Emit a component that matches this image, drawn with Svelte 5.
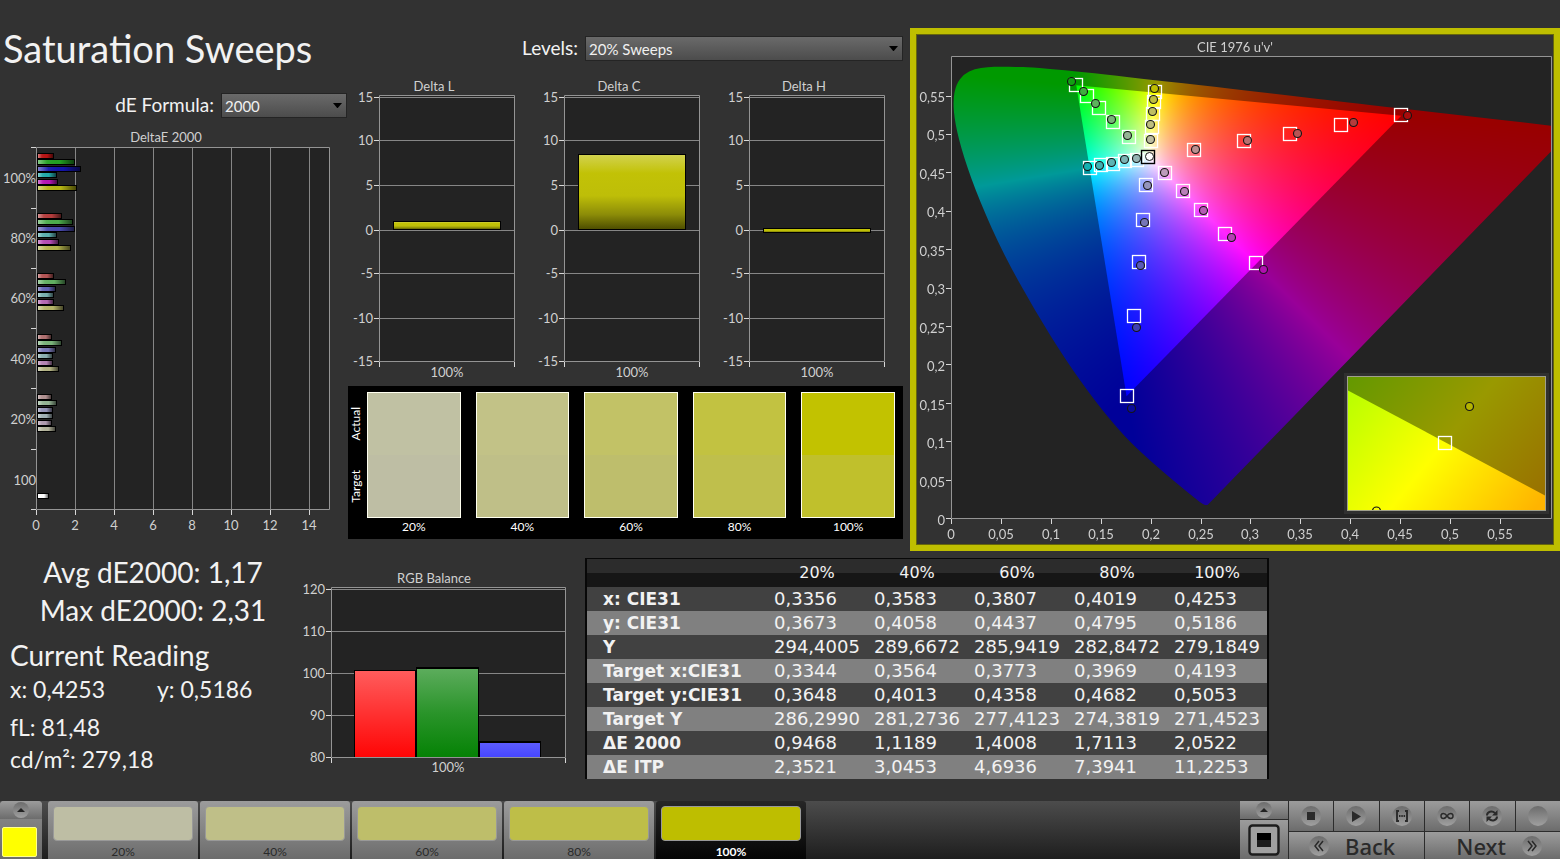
<script>
  import { onMount } from 'svelte';

  // Plot area of the chromaticity diagram, in view-box units
  const view = { x: 917, y: 35, w: 636, h: 509 };
  const px = (u) => 951.5 + u * 998;
  const py = (v) => 517.5 - v * 768.5;

  const locus = [
    [0.1741, 0.005], [0.1733, 0.0048], [0.1714, 0.0051], [0.1689, 0.0069], [0.1644, 0.0109],
    [0.1566, 0.0177], [0.144, 0.0297], [0.1355, 0.0399], [0.1241, 0.0578], [0.1096, 0.0868],
    [0.0913, 0.1327], [0.0687, 0.2007], [0.0454, 0.295], [0.0235, 0.4127], [0.0082, 0.5384],
    [0.0039, 0.6548], [0.0139, 0.7502], [0.0389, 0.812], [0.0743, 0.8338], [0.1142, 0.8262],
    [0.1547, 0.8059], [0.1929, 0.7816], [0.2296, 0.7543], [0.3016, 0.6923], [0.3731, 0.6245],
    [0.4441, 0.5547], [0.5125, 0.4866], [0.5752, 0.4242], [0.627, 0.3725], [0.6915, 0.3083],
    [0.7347, 0.2653]
  ].map(([x, y]) => {
    const d = -2 * x + 12 * y + 3;
    return [px((4 * x) / d), py((9 * y) / d)];
  });
  const gamut = [[0.4507, 0.5229], [0.125, 0.5625], [0.1754, 0.1579]].map(([u, v]) => [px(u), py(v)]);

  function colourField(scale) {
    const c = document.createElement('canvas');
    c.width = view.w;
    c.height = view.h;
    const g = c.getContext('2d');
    const img = g.createImageData(view.w, view.h);
    for (let j = 0; j < view.h; j++) {
      const v = Math.max(0.004, (517.5 - (view.y + j)) / 768.5);
      for (let i = 0; i < view.w; i++) {
        const u = (view.x + i - 951.5) / 998;
        const X = (9 * u) / (4 * v);
        const Z = (12 - 3 * u - 20 * v) / (4 * v);
        const rgb = [
          3.2406 * X - 1.5372 - 0.4986 * Z,
          -0.9689 * X + 1.8758 + 0.0415 * Z,
          0.0557 * X - 0.204 + 1.057 * Z
        ].map((n) => Math.max(0, n));
        const m = Math.max(...rgb, 0.0001);
        const o = (j * view.w + i) * 4;
        for (let k = 0; k < 3; k++) img.data[o + k] = (255 * scale * rgb[k]) / m;
        img.data[o + 3] = 255;
      }
    }
    g.putImageData(img, 0, 0);
    return c;
  }

  let canvas;
  onMount(() => {
    const g = canvas.getContext('2d');
    const at = ([x, y]) => [x - view.x, y - view.y];
    g.fillStyle = '#232323';
    g.fillRect(34, 21, 600, 462);
    g.save();
    g.beginPath();
    g.rect(34, 21, 600, 462);
    g.clip();
    g.save();
    g.beginPath();
    const p = locus.map(at);
    g.moveTo(...p[0]);
    for (let i = 1; i < p.length - 1; i++) {
      g.quadraticCurveTo(...p[i], (p[i][0] + p[i + 1][0]) / 2, (p[i][1] + p[i + 1][1]) / 2);
    }
    g.lineTo(...p[p.length - 1]);
    g.closePath();
    g.clip();
    g.drawImage(colourField(0.6), 0, 0);
    g.restore();
    g.beginPath();
    gamut.map(at).forEach((q) => g.lineTo(...q));
    g.closePath();
    g.clip();
    g.drawImage(colourField(1), 0, 0);
    g.restore();
  });

  // [target x, target y, actual x, actual y, fill]
  const points = [
    [1076, 85, 1071, 81, '#12a012'], [1087, 96, 1083, 91, '#3fae3f'], [1099, 108, 1095, 103, '#5cb45c'],
    [1113, 122, 1111, 119, '#78b478'], [1129, 137, 1127, 135, '#94b494'],
    [1155, 92, 1154, 88, '#bebe00'], [1154, 102, 1153, 99, '#bebe40'], [1153, 114, 1152, 111, '#bebe62'],
    [1152, 127, 1150, 124, '#bebe80'], [1151, 141, 1150, 139, '#bebea0'],
    [1090, 168, 1087, 166, '#14b0b0'], [1101, 165, 1099, 165, '#3fb0b0'], [1113, 164, 1111, 162, '#5cb4b4'],
    [1125, 161, 1124, 159, '#7ab4b4'], [1137, 160, 1136, 158, '#96b4b4'],
    [1146, 185, 1147, 185, '#9494bc'], [1143, 220, 1144, 222, '#7676b8'], [1139, 262, 1140, 265, '#5a5ab8'],
    [1134, 316, 1136, 327, '#4040b4'], [1127, 396, 1131, 408, '#0a0a9c'],
    [1165, 173, 1164, 172, '#bc9cbc'], [1183, 191, 1184, 191, '#b880b8'], [1201, 210, 1203, 210, '#b45cb4'],
    [1225, 234, 1231, 237, '#b440b4'], [1256, 263, 1263, 269, '#b010b0'],
    [1194, 150, 1195, 149, '#bc9090'], [1244, 141, 1247, 140, '#b87070'], [1290, 134, 1297, 133, '#b85454'],
    [1341, 125, 1353, 122, '#b43c3c'], [1401, 115, 1407, 115, '#a80c0c']
  ];
  const cieX = ['0', '0,05', '0,1', '0,15', '0,2', '0,25', '0,3', '0,35', '0,4', '0,45', '0,5', '0,55'];

  const deltaE = [
    { label: '100%', y: 153, ends: [54, 75, 81, 57, 58, 77], fills: ['#b81414', '#22a022', '#1414a8', '#22aaaa', '#b414b4', '#b4b414'] },
    { label: '80%', y: 213, ends: [62, 73, 75, 57, 59, 71], fills: ['#b43c3c', '#4cac4c', '#4848ac', '#5cb0b0', '#b44cb4', '#b4b44c'] },
    { label: '60%', y: 273, ends: [54, 66, 56, 54, 54, 64], fills: ['#b45454', '#62b062', '#6262b4', '#78b0b0', '#b468b4', '#b4b468'] },
    { label: '40%', y: 334, ends: [52, 62, 56, 53, 53, 59], fills: ['#b07070', '#7ab47a', '#7a7ab8', '#8cb0b0', '#b484b4', '#b4b484'] },
    { label: '20%', y: 394, ends: [52, 57, 53, 53, 52, 56], fills: ['#b09090', '#94b494', '#9494b8', '#a0b0b4', '#b09cb0', '#b4b49c'] }
  ];
  const deltaTicks = [[15, 97], [10, 140], [5, 185], [0, 230], [-5, 273], [-10, 318], [-15, 361]];
  const deltas = [
    { title: 'Delta L', top: 221, h: 8 },
    { title: 'Delta C', top: 154, h: 75 },
    { title: 'Delta H', top: 228, h: 4 }
  ];
  const rgbTicks = [[120, 589], [110, 631], [100, 673], [90, 715], [80, 757]];

  const levels = [
    { label: '20%', actual: '#c0c1a3', target: '#bebea4' },
    { label: '40%', actual: '#c2c287', target: '#bfbf88' },
    { label: '60%', actual: '#c2c266', target: '#bebe6c' },
    { label: '80%', actual: '#c2c241', target: '#bfbf4c' },
    { label: '100%', actual: '#c2c200', target: '#c0c02c' }
  ];
  const chips = ['#bebea4', '#bfbf88', '#bebe6a', '#bebe48', '#bebe00'];

  const rows = [
    ['x: CIE31', '0,3356', '0,3583', '0,3807', '0,4019', '0,4253'],
    ['y: CIE31', '0,3673', '0,4058', '0,4437', '0,4795', '0,5186'],
    ['Y', '294,4005', '289,6672', '285,9419', '282,8472', '279,1849'],
    ['Target x:CIE31', '0,3344', '0,3564', '0,3773', '0,3969', '0,4193'],
    ['Target y:CIE31', '0,3648', '0,4013', '0,4358', '0,4682', '0,5053'],
    ['Target Y', '286,2990', '281,2736', '277,4123', '274,3819', '271,4523'],
    ['ΔE 2000', '0,9468', '1,1189', '1,4008', '1,7113', '2,0522'],
    ['ΔE ITP', '2,3521', '3,0453', '4,6936', '7,3941', '11,2253']
  ];

  let selected = 4;
</script>

<div class="app">
  <main>
    <div class="top">
      <section class="left">
        <h1>Saturation Sweeps</h1>
        <div class="field formula">
          <label for="formula">dE Formula:</label>
          <span class="pick">
            <select id="formula"><option>2000</option></select>
            <svg class="arrow" viewBox="0 0 10 6"><path d="M0 0h10L5 6z" /></svg>
          </span>
        </div>
        <svg class="chart" viewBox="0 122 348 418" role="img" aria-label="DeltaE 2000">
          <defs>
            <linearGradient id="barH">
              <stop offset="0" stop-color="#fff" stop-opacity=".45" />
              <stop offset=".25" stop-color="#fff" stop-opacity=".05" />
              <stop offset=".6" stop-color="#000" stop-opacity="0" />
              <stop offset="1" stop-color="#000" stop-opacity=".6" />
            </linearGradient>
          </defs>
          <text x="166" y="142" text-anchor="middle">DeltaE 2000</text>
          <rect class="plot" x="37" y="148" width="292" height="361" />
          {#each [2, 4, 6, 8, 10, 12, 14] as n}
            <rect class="grid" x={Math.round(36 + n * 19.47)} y="148" width="1" height="361" />
          {/each}
          <path class="frame" d="M36.5 147.5h293v362h-293z" />
          {#each [147, 208, 268, 328, 388, 449, 509] as y}
            <rect class="tick" x="31" {y} width="5" height="1" />
          {/each}
          {#each [0, 2, 4, 6, 8, 10, 12, 14] as n}
            <rect class="tick" x={Math.round(36 + n * 19.47)} y="510" width="1" height="5" />
            <text x={Math.round(36 + n * 19.47)} y="530" text-anchor="middle">{n}</text>
          {/each}
          {#each deltaE as group}
            <text x="36" y={group.y + 30} text-anchor="end">{group.label}</text>
            {#each group.ends as end, i}
              <rect x="37" y={Math.round(group.y + i * 6.4)} width={end - 37} height="6" />
              <rect x="38" y={Math.round(group.y + i * 6.4) + 1} width={end - 39} height="4" fill={group.fills[i]} />
              <rect x="38" y={Math.round(group.y + i * 6.4) + 1} width={end - 39} height="4" fill="url(#barH)" />
            {/each}
          {/each}
          <text x="36" y="485" text-anchor="end">100</text>
          <rect x="37" y="493" width="12" height="6" />
          <rect x="38" y="494" width="10" height="4" fill="#fff" />
          <rect x="38" y="494" width="10" height="4" fill="url(#barH)" />
        </svg>
      </section>

      <section class="middle">
        <div class="field">
          <label for="levels">Levels:</label>
          <span class="pick wide">
            <select id="levels"><option>20% Sweeps</option></select>
            <svg class="arrow" viewBox="0 0 10 6"><path d="M0 0h10L5 6z" /></svg>
          </span>
        </div>
        <div class="deltas">
          {#each deltas as d, n}
            <svg class="chart" viewBox="0 72 185 312" role="img" aria-label={d.title}>
              <defs>
                <linearGradient id="barV{n}" x2="0" y2="1">
                  <stop offset="0" stop-color="#d2d250" />
                  <stop offset=".25" stop-color="#c2c206" />
                  <stop offset=".55" stop-color="#bebe08" />
                  <stop offset=".8" stop-color="#8c8c08" />
                  <stop offset="1" stop-color="#4c4c00" />
                </linearGradient>
              </defs>
              <text x="86" y="91" text-anchor="middle">{d.title}</text>
              <rect class="plot" x="31" y="96" width="135" height="265" />
              {#each deltaTicks as [label, y]}
                <rect class="grid" x="31" {y} width="135" height="1" />
                <rect class="tick" x="26" {y} width="5" height="1" />
                <text x="25" y={y + 5} text-anchor="end">{label}</text>
              {/each}
              <path class="frame" d="M31.5 95.5h135v266h-135z" />
              <rect class="tick" x="31" y="362" width="1" height="5" />
              <rect class="tick" x="166" y="362" width="1" height="5" />
              <rect x="45.5" y={d.top + 0.5} width="107" height={d.h} fill="url(#barV{n})" stroke="#000" />
              <text x="99" y="377" text-anchor="middle">100%</text>
            </svg>
          {/each}
        </div>
        <div class="compare">
          <div class="sides"><span>Actual</span><span>Target</span></div>
          {#each levels as l}
            <div class="level">
              <div class="pair">
                <div style="background:{l.actual}"></div>
                <div style="background:{l.target}"></div>
              </div>
              <span>{l.label}</span>
            </div>
          {/each}
        </div>
      </section>

      <section class="cie">
        <div class="stack">
          <canvas bind:this={canvas} width="636" height="509"></canvas>
          <svg viewBox="917 35 636 509" role="img" aria-label="CIE 1976 u'v'">
            <defs>
              <linearGradient id="lit" gradientUnits="userSpaceOnUse" x1="1357" y1="372" x2="1531" y2="514">
                <stop offset="0" stop-color="#b4ff00" /><stop offset=".5" stop-color="#ff0" /><stop offset="1" stop-color="#ffb400" />
              </linearGradient>
              <linearGradient id="dim" gradientUnits="userSpaceOnUse" x1="1357" y1="372" x2="1531" y2="514">
                <stop offset="0" stop-color="#659900" /><stop offset=".5" stop-color="#999900" /><stop offset="1" stop-color="#997000" />
              </linearGradient>
              <clipPath id="insetClip"><rect x="1348" y="377" width="197" height="133" /></clipPath>
            </defs>
            <text x="1235" y="52" text-anchor="middle">CIE 1976 u'v'</text>
            <path class="frame" d="M951.5 56.5h600v462h-600z" />
            {#each cieX as label, i}
              <rect class="tick" x={Math.round(951 + i * 49.9)} y="519" width="1" height="5" />
              <text x={Math.round(951 + i * 49.9)} y="539" text-anchor="middle">{label}</text>
              <rect class="tick" x="946" y={Math.round(518 - i * 38.4)} width="5" height="1" />
              <text x="945" y={Math.round(525 - i * 38.5)} text-anchor="end">{label}</text>
            {/each}
            {#each points as [tx, ty, ax, ay, fill]}
              <rect x={tx - 6.5} y={ty - 6.5} width="13" height="13" fill="none" stroke="#fff" stroke-width="1.3" />
              <circle cx={ax + 0.5} cy={ay + 0.5} r="4" {fill} stroke="#151515" stroke-width="1.1" />
            {/each}
            <rect x="1141.5" y="150.5" width="13" height="13" fill="none" stroke="#000" stroke-width="1.4" />
            <circle cx="1149.5" cy="156.5" r="4" fill="#fff" stroke="#151515" />
            <rect x="1344" y="373" width="205" height="141" fill="#303030" />
            <g clip-path="url(#insetClip)">
              <rect x="1347" y="376" width="199" height="135" fill="url(#dim)" />
              <path d="M1347 390L1546 496V512H1347z" fill="url(#lit)" />
              <circle cx="1376.5" cy="511" r="4" fill="none" stroke="#151515" stroke-width="1.2" />
            </g>
            <rect x="1347.5" y="376.5" width="198" height="134" fill="none" stroke="#a0a08c" />
            <rect x="1438.5" y="436.5" width="13" height="13" fill="none" stroke="#fff" stroke-width="1.3" />
            <circle cx="1469.5" cy="406.5" r="4" fill="#b4b400" stroke="#151515" stroke-width="1.2" />
          </svg>
        </div>
      </section>
    </div>

    <div class="bottom">
      <section class="readings">
        <p class="big">Avg dE2000: 1,17</p>
        <p class="big">Max dE2000: 2,31</p>
        <h2>Current Reading</h2>
        <p class="xy"><span>x: 0,4253</span><span>y: 0,5186</span></p>
        <p class="lum">fL: 81,48</p>
        <p>cd/m²: 279,18</p>
      </section>
      <svg class="chart rgb" viewBox="290 551 290 245" role="img" aria-label="RGB Balance">
        <defs>
          <linearGradient id="r" x2="0" y2="1"><stop stop-color="#ff5c5c" /><stop offset="1" stop-color="#ff0505" /></linearGradient>
          <linearGradient id="g" x2="0" y2="1"><stop stop-color="#5cac5c" /><stop offset=".5" stop-color="#2a942a" /><stop offset="1" stop-color="#058205" /></linearGradient>
          <linearGradient id="b" x2="0" y2="1"><stop stop-color="#5c5cff" /><stop offset="1" stop-color="#4646ff" /></linearGradient>
        </defs>
        <text x="434" y="583" text-anchor="middle">RGB Balance</text>
        <rect class="plot" x="332" y="588" width="233" height="169" />
        {#each rgbTicks as [label, y]}
          <rect class="grid" x="332" {y} width="233" height="1" />
          <rect class="tick" x="326" {y} width="5" height="1" />
          <text x="325" y={y + 5} text-anchor="end">{label}</text>
        {/each}
        <path class="frame" d="M331.5 587.5h234v170h-234z" />
        <rect class="tick" x="331" y="758" width="1" height="5" />
        <rect class="tick" x="565" y="758" width="1" height="5" />
        <path d="M354 757V670H416V667H479V741H541V757z" />
        <rect x="355" y="671" width="60" height="86" fill="url(#r)" />
        <rect x="417" y="669" width="61" height="88" fill="url(#g)" />
        <rect x="480" y="743" width="60" height="14" fill="url(#b)" />
        <text x="448" y="772" text-anchor="middle">100%</text>
      </svg>
      <div class="data">
        <table>
          <thead>
            <tr><th></th>{#each levels as l}<th>{l.label}</th>{/each}</tr>
          </thead>
          <tbody>
            {#each rows as [name, ...values]}
              <tr><th scope="row">{name}</th>{#each values as v}<td>{v}</td>{/each}</tr>
            {/each}
          </tbody>
        </table>
      </div>
    </div>
  </main>

  <footer>
    <div class="current">
      <button class="up" aria-label="Expand patterns">
        <svg viewBox="0 0 16 16"><path d="M4 10h8L8 6z" /></svg>
      </button>
      <div class="patch"></div>
    </div>
    <div class="chips">
      {#each levels as l, i}
        <button class="chip" class:on={selected === i} onclick={() => (selected = i)}>
          <i style="background:{chips[i]}"></i>
          <span>{l.label}</span>
        </button>
      {/each}
    </div>
    <div class="controls">
      <div class="window">
        <button class="up" aria-label="Expand window">
          <svg viewBox="0 0 16 16"><path d="M4 10h8L8 6z" /></svg>
        </button>
        <button class="full" aria-label="Pattern window">
          <svg viewBox="0 0 32 32">
            <rect x="1.5" y="1.5" width="29" height="29" rx="3" fill="#a0a0a0" stroke="#1c1c1c" stroke-width="2.4" />
            <rect x="9" y="9" width="14" height="14" fill="#000" /><rect x="9" y="16" width="14" height="7" fill="#1c1c1c" />
          </svg>
        </button>
      </div>
      <div class="pad">
        <div class="tools">
          <button aria-label="Stop"><svg viewBox="0 0 20 20"><rect x="6" y="6" width="8" height="8" /></svg></button>
          <button aria-label="Play"><svg viewBox="0 0 20 20"><path d="M6 5v11l9-5.500z" /></svg></button>
          <button aria-label="Range"><svg viewBox="0 0 20 20"><path d="M7 5H5v10h2M13 5h2v10h-2" fill="none" stroke="#2a2a2a" stroke-width="1.900" /><path d="M7 9h1.500v2H7zM9.300 9h1.500v2H9.300zM11.600 9h1.500v2h-1.500z" /></svg></button>
          <button aria-label="Loop"><svg viewBox="0 0 20 20"><path d="M10 10C8 7 4 6.500 4 10s4 3 6 0 6-3.500 6 0-4 3-6 0z" fill="none" stroke="#2a2a2a" stroke-width="1.500" /></svg></button>
          <button aria-label="Refresh"><svg viewBox="0 0 20 20"><path d="M5 9.500C5 5.500 10 4.500 13 7M15 10.500c0 4-5 5-8 2.500" fill="none" stroke="#2a2a2a" stroke-width="2" /><path d="M15.500 4v5.500H10zM4.500 16v-5.500H10z" /></svg></button>
          <button aria-label="Record"><svg viewBox="0 0 20 20"></svg></button>
        </div>
        <div class="nav">
          <button class="back"><svg viewBox="0 0 20 20"><path d="M10 5l-4 5 4 5M14 5l-4 5 4 5" fill="none" stroke="#2a2a2a" stroke-width="1.500" /></svg>Back</button>
          <button class="next">Next<svg viewBox="0 0 20 20"><path d="M6 5l4 5-4 5M10 5l4 5-4 5" fill="none" stroke="#2a2a2a" stroke-width="1.500" /></svg></button>
        </div>
      </div>
    </div>
  </footer>
</div>

<style>
  :global(body) {
    margin: 0;
    background: #323232;
  }
  .app {
    display: flex;
    flex-direction: column;
    min-height: 100vh;
    color: #f2f2f2;
    font-family: Lato, sans-serif;
  }
  main {
    flex: 1;
  }
  h1, h2, p {
    margin: 0;
    font-weight: 400;
  }
  svg {
    display: block;
  }
  .top {
    display: grid;
    grid-template-columns: minmax(0, 348fr) minmax(0, 562fr) minmax(0, 650fr);
    align-items: start;
  }
  h1 {
    padding: 24px 0 20px 3px;
    font-size: 38px;
    line-height: 48px;
    white-space: nowrap;
  }
  .field {
    display: flex;
    justify-content: flex-end;
    align-items: center;
    gap: 7px;
    height: 25px;
    font-size: 19px;
  }
  .field label {
    line-height: 22px;
    padding-bottom: 2px;
  }
  .formula {
    padding: 1px 1px 4px 0;
  }
  .pick {
    display: grid;
    align-items: center;
    width: 126px;
  }
  .pick.wide {
    width: 318px;
  }
  .pick > * {
    grid-area: 1 / 1;
  }
  select {
    appearance: none;
    width: 100%;
    height: 25px;
    margin: 0;
    padding: 0 20px 0 3px;
    border: 1px solid #242424;
    border-radius: 0;
    background: linear-gradient(#6a6a6a, #4c4c4c);
    color: #f0f0f0;
    font: 15px Lato, sans-serif;
  }
  .arrow {
    justify-self: end;
    width: 9px;
    margin-right: 5px;
    pointer-events: none;
  }
  .chart {
    width: 100%;
  }
  svg text {
    fill: #d0d0d0;
    font: 13px Lato, sans-serif;
  }
  .plot {
    fill: #232323;
  }
  .grid {
    fill: #868686;
  }
  .frame {
    fill: none;
    stroke: #949494;
  }
  .tick {
    fill: #d8d8d8;
  }
  .middle {
    padding: 36px 7px 0 0;
  }
  .deltas {
    display: grid;
    grid-template-columns: repeat(3, 1fr);
    padding: 11px 0 2px;
  }
  .compare {
    display: grid;
    grid-template-columns: 4px repeat(5, minmax(0, 1fr));
    column-gap: 15px;
    padding: 6px 8px 3px 0;
    background: #000;
    color: #fff;
    font-size: 12px;
  }
  .sides {
    display: flex;
    flex-direction: column;
    justify-content: space-around;
    width: 16px;
    height: 126px;
  }
  .sides span {
    writing-mode: vertical-rl;
    transform: rotate(180deg);
    line-height: 16px;
    text-align: center;
    font-size: 12px;
  }
  .level {
    text-align: center;
    line-height: 18px;
  }
  .pair {
    display: grid;
    grid-template-rows: 1fr 1fr;
    box-sizing: border-box;
    height: 126px;
    border: 1px solid #fffff0;
  }
  .cie {
    margin-top: 28px;
    padding: 1px;
    border: 6px solid #bebe00;
    background: #66660c;
  }
  .stack {
    display: grid;
    background: #323232;
  }
  .stack > * {
    grid-area: 1 / 1;
    display: block;
    width: 100%;
    height: auto;
  }
  .bottom {
    display: grid;
    grid-template-columns: minmax(0, 290fr) minmax(0, 290fr) minmax(0, 980fr);
  }
  .readings {
    padding-top: 2px;
    font-size: 23px;
    line-height: 32px;
    white-space: nowrap;
  }
  .readings > * {
    padding-left: 10px;
  }
  .readings .big {
    padding: 0 0 0 16px;
    font-size: 28px;
    line-height: 38px;
    text-align: center;
  }
  h2 {
    padding-top: 8px;
    font-size: 28px;
    line-height: 36px;
  }
  .xy {
    display: flex;
    gap: 52px;
  }
  .lum {
    padding-top: 6px;
  }
  .data {
    padding: 7px 0 0 5px;
  }
  table {
    width: 684px;
    border: solid #080808;
    border-width: 1px 2px 0;
    border-spacing: 0;
    table-layout: fixed;
    font: 18px "DejaVu Sans", sans-serif;
  }
  th, td {
    height: 24px;
    padding: 0 0 0 7px;
    text-align: left;
    line-height: 24px;
  }
  th:first-child {
    width: 164px;
    padding-left: 16px;
    font-size: 17px;
    white-space: nowrap;
  }
  thead th {
    height: 28px;
    padding: 0;
    background: linear-gradient(#2c2c2c 0 50%, #161616 50%);
    font-size: 16px;
    font-weight: 400;
    text-align: center;
  }
  tbody tr {
    background: #414141;
  }
  tbody tr:nth-child(even) {
    background: #808080;
  }
  button {
    display: flex;
    align-items: center;
    justify-content: center;
    margin: 0;
    padding: 0;
    border: 0;
    background: linear-gradient(#9c9c9c, #6c6c6c);
    color: #2a2a2a;
    font-family: Lato, sans-serif;
  }
  footer {
    display: flex;
    height: 58px;
    background: linear-gradient(#4c4c4c, #1e1e1e);
  }
  .current {
    width: 42px;
    border-radius: 4px 4px 0 0;
    background: linear-gradient(#8c8c8c, #6c6c6c);
    overflow: hidden;
  }
  .up {
    width: 100%;
    height: 18px;
  }
  .up svg {
    width: 16px;
    border-radius: 50%;
    background: linear-gradient(#6c6c6c, #a0a0a0);
    fill: #222;
  }
  .patch {
    width: 33px;
    height: 28px;
    margin: 8px 2px;
    border: 1px solid #ffff90;
    border-radius: 2px;
    background: #ff0;
  }
  .chips {
    display: flex;
    flex: 1;
    gap: 2px;
    padding-left: 6px;
  }
  .chip {
    flex-direction: column;
    justify-content: flex-start;
    gap: 4px;
    width: 150px;
    padding-top: 5px;
    border-radius: 3px 3px 0 0;
    font-size: 12px;
    line-height: 14px;
  }
  .chip i {
    box-sizing: border-box;
    width: 140px;
    height: 36px;
    border: 1px solid #999;
    border-radius: 4px;
  }
  .chip.on {
    background: linear-gradient(#262626, #050505);
    color: #fff;
    font-weight: 700;
  }
  .controls {
    display: flex;
    gap: 1px;
    background: #2c2c2c;
  }
  .window {
    display: flex;
    flex-direction: column;
    gap: 1px;
    width: 48px;
  }
  .full {
    flex: 1;
  }
  .full svg {
    width: 32px;
  }
  .pad {
    display: flex;
    flex-direction: column;
    gap: 1px;
    width: 271px;
  }
  .tools, .nav {
    display: grid;
    grid-template-columns: repeat(6, 1fr);
    gap: 1px;
    height: 30px;
  }
  .tools svg, .nav svg {
    width: 20px;
    height: 20px;
    border-radius: 50%;
    background: linear-gradient(#6c6c6c, #a0a0a0);
    fill: #2a2a2a;
  }
  .nav {
    flex: 1;
    grid-template-columns: 1fr 1fr;
    height: 27px;
  }
  .nav button {
    gap: 16px;
    font: 500 22px/24px "Noto Sans", sans-serif;
  }
  .nav .back {
    justify-content: flex-start;
    padding-left: 20px;
  }
  .nav .next {
    justify-content: flex-end;
    padding-right: 18px;
  }
</style>
